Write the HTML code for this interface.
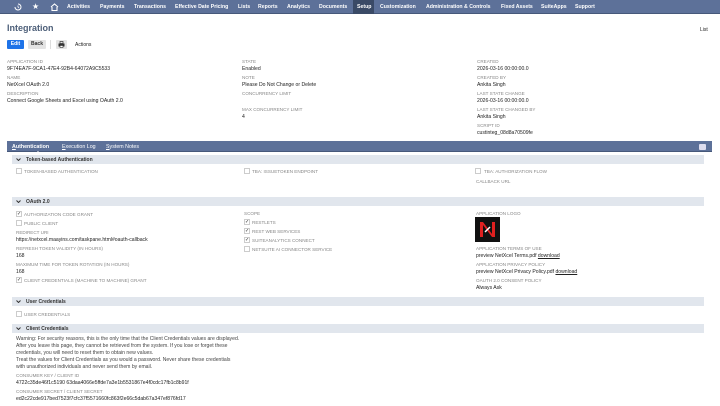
<!DOCTYPE html>
<html><head><meta charset="utf-8"><style>
*{margin:0;padding:0;box-sizing:border-box}
body{width:720px;height:406px;overflow:hidden;background:#fff;font-family:"Liberation Sans",sans-serif;color:#222;position:relative}
.a{position:absolute;white-space:nowrap}
.nav{position:absolute;left:0;top:0;width:720px;height:14px;background:#5d7199;border-bottom:1px solid #46587a}
.ni{position:absolute;top:4px;font-size:5.2px;color:#fff;font-weight:bold}
.lb{font-size:4.6px;color:#888}
.v{font-size:5.1px;color:#222}
.sh{position:absolute;left:12px;width:692px;height:9px;background:#e1e6ed}
.sh span{position:absolute;left:14px;top:2px;font-size:5px;font-weight:bold;color:#333}
.sh svg{position:absolute;left:4px;top:3px}
.cb{position:absolute;width:6px;height:6px;border:1px solid #ccc;background:#fff;font-size:5px;line-height:5px;color:#222;text-align:center}
</style></head><body>
<div class="nav">
<svg class="a" style="left:14px;top:3px" width="8" height="8" viewBox="0 0 8 8"><path d="M4 1a3 3 0 1 1-3 3" stroke="#fff" fill="none" stroke-width="1"/><path d="M4 2.5V4l1 1" stroke="#fff" fill="none" stroke-width=".8"/></svg>
<div class="a" style="left:32px;top:2px;color:#fff;font-size:8px">★</div>
<svg class="a" style="left:50px;top:3px" width="9" height="8" viewBox="0 0 9 8"><path d="M1 4L4.5 1 8 4M2 4v3.5h5V4" stroke="#fff" fill="none" stroke-width="1.1"/></svg>
<div class="ni" style="left:67px">Activities</div>
<div class="ni" style="left:100px">Payments</div>
<div class="ni" style="left:134px">Transactions</div>
<div class="ni" style="left:175px">Effective Date Pricing</div>
<div class="ni" style="left:238px">Lists</div>
<div class="ni" style="left:258px">Reports</div>
<div class="ni" style="left:287px">Analytics</div>
<div class="ni" style="left:319px">Documents</div>
<div class="a" style="left:353px;top:0;width:21px;height:14px;background:#3a4a66"></div>
<div class="ni" style="left:357px">Setup</div>
<div class="ni" style="left:380px">Customization</div>
<div class="ni" style="left:426px">Administration &amp; Controls</div>
<div class="ni" style="left:501px">Fixed Assets</div>
<div class="ni" style="left:541px">SuiteApps</div>
<div class="ni" style="left:575px">Support</div>
</div>
<div class="a" style="left:7px;top:23px;font-size:9px;font-weight:bold;color:#4d5f79">Integration</div>
<div class="a" style="left:700px;top:27px;font-size:5px">List</div>
<div class="a" style="left:7px;top:40px;width:17px;height:9px;background:#1e73e8;border-radius:1px;color:#fff;font-size:5px;text-align:center;line-height:9px;font-weight:bold">Edit</div>
<div class="a" style="left:28px;top:40px;width:18px;height:9px;background:#e3e3e3;border-radius:1px;color:#333;font-size:5px;text-align:center;line-height:9px;font-weight:bold">Back</div>
<div class="a" style="left:50px;top:40px;width:1px;height:9px;background:#ddd"></div>
<div class="a" style="left:56px;top:40px;width:11px;height:9px;background:#e3e3e3;border-radius:1px"></div>
<svg class="a" style="left:58px;top:41px" width="7" height="7" viewBox="0 0 7 7"><rect x="2" y="0.5" width="3" height="2" fill="none" stroke="#333" stroke-width=".7"/><rect x="0.5" y="2.5" width="6" height="3" fill="#333"/><rect x="2" y="4.5" width="3" height="2" fill="#fff" stroke="#333" stroke-width=".6"/></svg>
<div class="a" style="left:75px;top:42px;font-size:5px">Actions</div>

<div class="a lb" style="left:7px;top:59px">APPLICATION ID</div>
<div class="a v" style="left:7px;top:66px">9F74EA7F-9CA1-47E4-92B4-64072A9C5533</div>
<div class="a lb" style="left:7px;top:75px">NAME</div>
<div class="a v" style="left:7px;top:82px">NetXcel OAuth 2.0</div>
<div class="a lb" style="left:7px;top:91px">DESCRIPTION</div>
<div class="a v" style="left:7px;top:98px">Connect Google Sheets and Excel using OAuth 2.0</div>

<div class="a lb" style="left:242px;top:59px">STATE</div>
<div class="a v" style="left:242px;top:66px">Enabled</div>
<div class="a lb" style="left:242px;top:75px">NOTE</div>
<div class="a v" style="left:242px;top:82px">Please Do Not Change or Delete</div>
<div class="a lb" style="left:242px;top:91px">CONCURRENCY LIMIT</div>
<div class="a lb" style="left:242px;top:107px">MAX CONCURRENCY LIMIT</div>
<div class="a v" style="left:242px;top:114px">4</div>

<div class="a lb" style="left:477px;top:59px">CREATED</div>
<div class="a v" style="left:477px;top:66px">2026-03-16 00:00:00.0</div>
<div class="a lb" style="left:477px;top:75px">CREATED BY</div>
<div class="a v" style="left:477px;top:82px">Ankita Singh</div>
<div class="a lb" style="left:477px;top:91px">LAST STATE CHANGE</div>
<div class="a v" style="left:477px;top:98px">2026-03-16 00:00:00.0</div>
<div class="a lb" style="left:477px;top:107px">LAST STATE CHANGED BY</div>
<div class="a v" style="left:477px;top:114px">Ankita Singh</div>
<div class="a lb" style="left:477px;top:123px">SCRIPT ID</div>
<div class="a v" style="left:477px;top:130px">custinteg_08d8a70509fe</div>

<div class="a" style="left:7px;top:141px;width:705px;height:11px;background:#5d7199;border-bottom:1px solid #46587a"></div>
<div class="a" style="left:12px;top:144px;font-size:5.3px;color:#fff;font-weight:bold"><u>A</u>uthentication</div>
<div class="a" style="left:36px;top:151px;width:0;height:0;border-left:2px solid transparent;border-right:2px solid transparent;border-bottom:2px solid #fff"></div>
<div class="a" style="left:62px;top:144px;font-size:5.3px;color:#fff"><u>E</u>xecution Log</div>
<div class="a" style="left:106px;top:144px;font-size:5.3px;color:#fff"><u>S</u>ystem Notes</div>
<div class="a" style="left:699px;top:144px;width:7px;height:6px;background:#dde;border-radius:1px"></div>

<div class="sh" style="top:155px"><svg width="5" height="3" viewBox="0 0 5 3"><path d="M.5 .5L2.5 2.5 4.5 .5" stroke="#333" fill="none" stroke-width="1"/></svg><span>Token-based Authentication</span></div>
<div class="cb" style="left:16px;top:168px"></div><div class="a lb" style="left:24px;top:169px">TOKEN-BASED AUTHENTICATION</div>
<div class="cb" style="left:244px;top:168px"></div><div class="a lb" style="left:252px;top:169px">TBA: ISSUETOKEN ENDPOINT</div>
<div class="cb" style="left:475px;top:168px"></div><div class="a lb" style="left:484px;top:169px">TBA: AUTHORIZATION FLOW</div>
<div class="a lb" style="left:476px;top:179px">CALLBACK URL</div>

<div class="sh" style="top:197px"><svg width="5" height="3" viewBox="0 0 5 3"><path d="M.5 .5L2.5 2.5 4.5 .5" stroke="#333" fill="none" stroke-width="1"/></svg><span>OAuth 2.0</span></div>
<div class="cb" style="left:16px;top:211px">✓</div><div class="a lb" style="left:24px;top:212px">AUTHORIZATION CODE GRANT</div>
<div class="cb" style="left:16px;top:220px"></div><div class="a lb" style="left:24px;top:221px">PUBLIC CLIENT</div>
<div class="a lb" style="left:16px;top:230px">REDIRECT URI</div>
<div class="a v" style="left:16px;top:237px">https://netxcel.maayins.com/taskpane.html#oauth-callback</div>
<div class="a lb" style="left:16px;top:246px">REFRESH TOKEN VALIDITY (IN HOURS)</div>
<div class="a v" style="left:16px;top:253px">168</div>
<div class="a lb" style="left:16px;top:262px">MAXIMUM TIME FOR TOKEN ROTATION (IN HOURS)</div>
<div class="a v" style="left:16px;top:269px">168</div>
<div class="cb" style="left:16px;top:277px">✓</div><div class="a lb" style="left:24px;top:278px">CLIENT CREDENTIALS (MACHINE TO MACHINE) GRANT</div>

<div class="a lb" style="left:244px;top:211px">SCOPE</div>
<div class="cb" style="left:244px;top:219px">✓</div><div class="a lb" style="left:252px;top:220px">RESTLETS</div>
<div class="cb" style="left:244px;top:228px">✓</div><div class="a lb" style="left:252px;top:229px">REST WEB SERVICES</div>
<div class="cb" style="left:244px;top:237px">✓</div><div class="a lb" style="left:252px;top:238px">SUITEANALYTICS CONNECT</div>
<div class="cb" style="left:244px;top:246px"></div><div class="a lb" style="left:252px;top:247px">NETSUITE AI CONNECTOR SERVICE</div>

<div class="a lb" style="left:476px;top:211px">APPLICATION LOGO</div>
<div class="a" style="left:475px;top:217px;width:25px;height:25px;background:#111"></div>
<svg class="a" style="left:477px;top:219px" width="21" height="21" viewBox="0 0 21 21"><path d="M3 3h3l9 12V3h3v15h-3L6 6v12H3z" fill="#e02020"/><path d="M8 13l5-5" stroke="#fff" stroke-width="1.5"/></svg>
<div class="a lb" style="left:476px;top:246px">APPLICATION TERMS OF USE</div>
<div class="a v" style="left:476px;top:253px">preview NetXcel Terms.pdf <u>download</u></div>
<div class="a lb" style="left:476px;top:262px">APPLICATION PRIVACY POLICY</div>
<div class="a v" style="left:476px;top:269px">preview NetXcel Privacy Policy.pdf <u>download</u></div>
<div class="a lb" style="left:476px;top:278px">OAUTH 2.0 CONSENT POLICY</div>
<div class="a v" style="left:476px;top:285px">Always Ask</div>

<div class="sh" style="top:297px"><svg width="5" height="3" viewBox="0 0 5 3"><path d="M.5 .5L2.5 2.5 4.5 .5" stroke="#333" fill="none" stroke-width="1"/></svg><span>User Credentials</span></div>
<div class="cb" style="left:16px;top:311px"></div><div class="a lb" style="left:24px;top:312px">USER CREDENTIALS</div>

<div class="sh" style="top:324px"><svg width="5" height="3" viewBox="0 0 5 3"><path d="M.5 .5L2.5 2.5 4.5 .5" stroke="#333" fill="none" stroke-width="1"/></svg><span>Client Credentials</span></div>
<div class="a v" style="left:16px;top:336px;line-height:7px;color:#444">Warning: For security reasons, this is the only time that the Client Credentials values are displayed.<br>After you leave this page, they cannot be retrieved from the system. If you lose or forget these<br>credentials, you will need to reset them to obtain new values.<br>Treat the values for Client Credentials as you would a password. Never share these credentials<br>with unauthorized individuals and never send them by email.</div>
<div class="a lb" style="left:16px;top:373px">CONSUMER KEY / CLIENT ID</div>
<div class="a v" style="left:16px;top:380px">4722c35de46f1c5190 63daa4066e5ffde7a3e1b5531867e4f0cdc17fb1c8b91f</div>
<div class="a lb" style="left:16px;top:389px">CONSUMER SECRET / CLIENT SECRET</div>
<div class="a v" style="left:16px;top:396px">ed2c22cde917bed7523f7cfc37f5571660fc863f2e66c5dab67a347ef876fd17</div>
</body></html>
